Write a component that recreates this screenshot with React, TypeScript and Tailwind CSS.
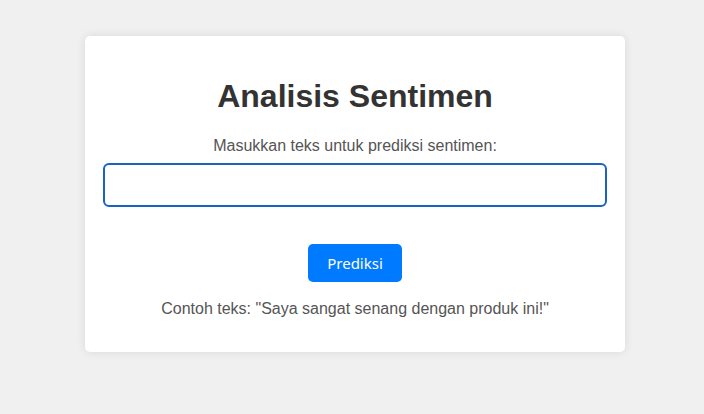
import React, { useState } from 'react';

export default function App() {
    const [text, setText] = useState('');

    return (
        <div className="min-h-[414px] w-full bg-[#f0f0f0] pt-[36px] font-['Liberation_Sans',Arial,sans-serif]">
            {/* Card */}
            <div className="ml-[85px] w-[540px] rounded-[5px] bg-white px-[20px] pb-[20px] pt-[20px] text-center shadow-[0_0_10px_rgba(0,0,0,0.1)]">
                <h1 className="mt-[22px] mb-[22px] text-[32px] font-bold leading-[37px] text-[#333333]">Analisis Sentimen</h1>
                <p className="text-[16px] leading-[18px] text-[#555555]">Masukkan teks untuk prediksi sentimen:</p>
                <div className="-mx-[2px] mt-[8px] rounded-[6px] border-2 border-[#1a63c4]">
                    <input
                        autoFocus
                        type="text"
                        value={text}
                        onChange={(e) => setText(e.target.value)}
                        className="block h-[40px] w-full rounded-[4px] bg-transparent px-[11px] text-[16px] text-[#333] caret-black outline-none"
                    />
                </div>
                <button className="mt-[37px] h-[38px] w-[94px] rounded-[5px] bg-[#007bff] font-['Noto_Sans',sans-serif] text-[15px] leading-[20px] text-white">
                    Prediksi
                </button>
                <p className="mt-[18px] mb-[14px] text-[16px] leading-[18px] text-[#555555]">
                    Contoh teks: "Saya sangat senang dengan produk ini!"
                </p>
            </div>
        </div>
    );
}
